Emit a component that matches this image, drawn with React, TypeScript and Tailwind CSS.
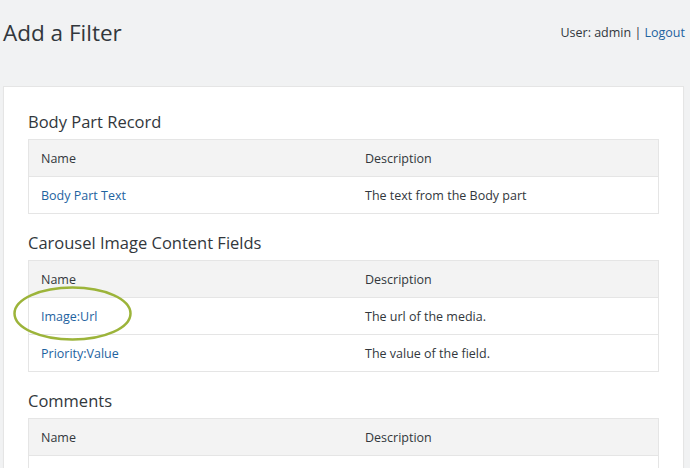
const sections = [
  {
    title: 'Body Part Record',
    rows: [{ name: 'Body Part Text', desc: 'The text from the Body part' }],
  },
  {
    title: 'Carousel Image Content Fields',
    rows: [
      { name: 'Image:Url', desc: 'The url of the media.' },
      { name: 'Priority:Value', desc: 'The value of the field.' },
    ],
  },
  {
    title: 'Comments',
    rows: [{ name: '', desc: '' }],
  },
];

function FieldTable({ rows }: { rows: { name: string; desc: string }[] }) {
  return (
    <div className="mt-[4px] border border-[#e5e5e5] text-[12.5px]">
      <div className="grid grid-cols-[324px_1fr] h-[36px] pt-[2px] items-center bg-[#f3f3f3] text-[#32373c]">
        <div className="px-[12px]">Name</div>
        <div className="px-[12px]">Description</div>
      </div>
      {rows.map((r, i) => (
        <div
          key={i}
          className="grid grid-cols-[324px_1fr] h-[37px] pt-[2px] items-center border-t border-[#e5e5e5] bg-white"
        >
          <div className="px-[12px]">
            <a href="#" className="text-[#1e639f]">{r.name}</a>
          </div>
          <div className="px-[12px] text-[#32373c]">{r.desc}</div>
        </div>
      ))}
    </div>
  );
}

export default function App() {
  return (
    <div
      className="relative h-[468px] bg-[#f1f2f3] text-[#32373c] overflow-hidden"
      style={{ fontFamily: '"Open Sans", "Noto Sans", sans-serif' }}
    >
      {/* Header */}
      <div className="flex items-center justify-between h-[68px] pl-[3px] pr-[5px]">
        <h1 className="text-[22.5px] text-[#32373c] -mt-[2px]">Add a Filter</h1>
        <div className="text-[12.5px] text-[#32373c] -mt-[2px]">
          User: admin | <a href="#" className="text-[#1e639f]">Logout</a>
        </div>
      </div>

      {/* Card */}
      <div className="mt-[18px] ml-[3px] mr-[6px] bg-white border border-[#e5e5e5] px-[24px] pt-[22px] pb-[24px] shadow-[0_1px_1px_rgba(0,0,0,0.04)]">
        {sections.map((s, i) => (
          <div key={s.title} className={i === 0 ? '' : 'mt-[16px]'}>
            <h2 className="text-[16.5px] leading-[26px] text-[#32373c]">{s.title}</h2>
            <FieldTable rows={s.rows} />
          </div>
        ))}
      </div>

      {/* Highlight ring */}
      <svg
        className="absolute left-0 top-0 pointer-events-none"
        width="690"
        height="468"
      >
        <ellipse
          cx="72.5"
          cy="313.5"
          rx="58"
          ry="26"
          fill="none"
          stroke="#9cb43a"
          strokeWidth="2.5"
        />
      </svg>
    </div>
  );
}
